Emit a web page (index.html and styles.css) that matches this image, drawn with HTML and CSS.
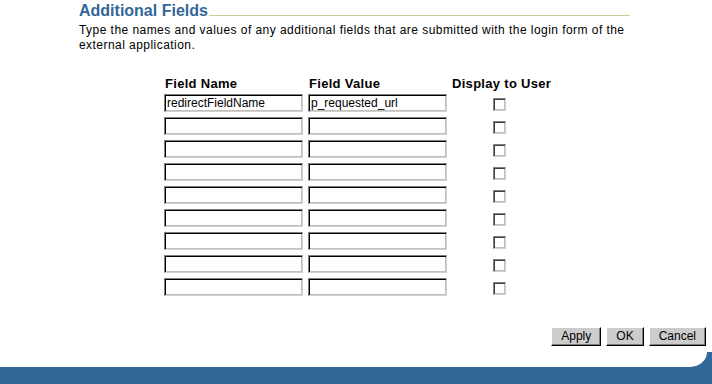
FILE: index.html
```html
<!DOCTYPE html>
<html>
<head>
<meta charset="utf-8">
<link rel="stylesheet" href="styles.css">
</head>
<body>
<div class="page">
  <div class="content">
    <div class="title-row">
      <h2 class="title">Additional Fields</h2>
      <div class="title-line"></div>
    </div>
    <p class="desc">Type the names and values of any additional fields that are submitted with the login form of the external application.</p>
  </div>
  <div class="grid">
    <div class="hdr">Field Name</div>
    <div class="hdr">Field Value</div>
    <div class="hdr">Display to User</div>

    <input class="field" type="text" value="redirectFieldName">
    <input class="field" type="text" value="p_requested_url">
    <div class="chk-cell"><input class="chk" type="checkbox"></div>

    <input class="field" type="text"><input class="field" type="text"><div class="chk-cell"><input class="chk" type="checkbox"></div>
    <input class="field" type="text"><input class="field" type="text"><div class="chk-cell"><input class="chk" type="checkbox"></div>
    <input class="field" type="text"><input class="field" type="text"><div class="chk-cell"><input class="chk" type="checkbox"></div>
    <input class="field" type="text"><input class="field" type="text"><div class="chk-cell"><input class="chk" type="checkbox"></div>
    <input class="field" type="text"><input class="field" type="text"><div class="chk-cell"><input class="chk" type="checkbox"></div>
    <input class="field" type="text"><input class="field" type="text"><div class="chk-cell"><input class="chk" type="checkbox"></div>
    <input class="field" type="text"><input class="field" type="text"><div class="chk-cell"><input class="chk" type="checkbox"></div>
    <input class="field" type="text"><input class="field" type="text"><div class="chk-cell"><input class="chk" type="checkbox"></div>
  </div>
  <div class="buttons">
    <button class="btn">Apply</button>
    <button class="btn">OK</button>
    <button class="btn">Cancel</button>
  </div>
  <div class="footer">
    <div class="footer-cap"></div>
  </div>
</div>
</body>
</html>
```
FILE: styles.css
```css
html, body {
  margin: 0;
  padding: 0;
  background: #ffffff;
}
body {
  font-family: "Liberation Sans", Arial, sans-serif;
  color: #000000;
  width: 712px;
  height: 384px;
  overflow: hidden;
}
.page {
  display: flex;
  flex-direction: column;
  height: 384px;
}
.content {
  padding: 1px 82px 0 79px;
}
.title-row {
  display: flex;
  align-items: flex-end;
}
.title {
  margin: 0;
  font-size: 16px;
  font-weight: bold;
  line-height: 19px;
  color: #336699;
}
.title-line {
  flex: 1;
  border-bottom: 1px solid #cccc99;
  margin-bottom: 4px;
  margin-left: 1px;
}
.desc {
  margin: 3px 0 0 0;
  font-size: 12px;
  line-height: 15px;
  letter-spacing: 0.45px;
}
.grid {
  display: grid;
  grid-template-columns: 139px 139px 94px;
  column-gap: 5px;
  row-gap: 5px;
  align-self: center;
  margin-top: 24px;
  margin-left: -2px;
}
.hdr {
  font-size: 13px;
  font-weight: bold;
  line-height: 14px;
  margin-bottom: -2px;
  padding-left: 1px;
  letter-spacing: 0.3px;
  white-space: nowrap;
}
.hdr:nth-child(3) {
  padding-left: 0;
}
.field {
  box-sizing: border-box;
  width: 139px;
  height: 18px;
  margin: 0;
  padding: 0 2px;
  font-family: "Liberation Sans", Arial, sans-serif;
  font-size: 12px;
  color: #000;
  background: #fff;
  border: 1px solid;
  border-color: #808080 #d4d0c8 #d4d0c8 #808080;
  box-shadow: inset 1px 1px 0 #000, inset -1px -1px 0 #c0c0c0;
  outline: none;
}
.chk-cell {
  display: flex;
  justify-content: center;
  align-items: flex-start;
  padding-top: 4px;
  padding-left: 1px;
}
.chk {
  appearance: none;
  -webkit-appearance: none;
  box-sizing: border-box;
  width: 13px;
  height: 13px;
  margin: 0;
  background: #fff;
  border: 1px solid;
  border-color: #808080 #d4d0c8 #d4d0c8 #808080;
  box-shadow: inset 1px 1px 0 #404040, inset -1px -1px 0 #c0c0c0;
}
.buttons {
  display: flex;
  justify-content: flex-end;
  gap: 5px;
  margin-top: 31px;
  padding-right: 6px;
}
.btn {
  box-sizing: border-box;
  height: 19px;
  margin: 0;
  padding: 0 9px;
  font-family: "Liberation Sans", Arial, sans-serif;
  font-size: 12px;
  line-height: 15px;
  color: #000;
  background: #cccccc;
  border: 1px solid;
  border-color: #ffffff #000000 #000000 #ffffff;
  box-shadow: inset -1px -1px 0 #808080;
}
.footer {
  margin-top: auto;
  height: 32px;
  background: #336699;
}
.footer-cap {
  height: 15px;
  margin-right: 5px;
  background: #ffffff;
  border-bottom-right-radius: 17px 15px;
}
```
